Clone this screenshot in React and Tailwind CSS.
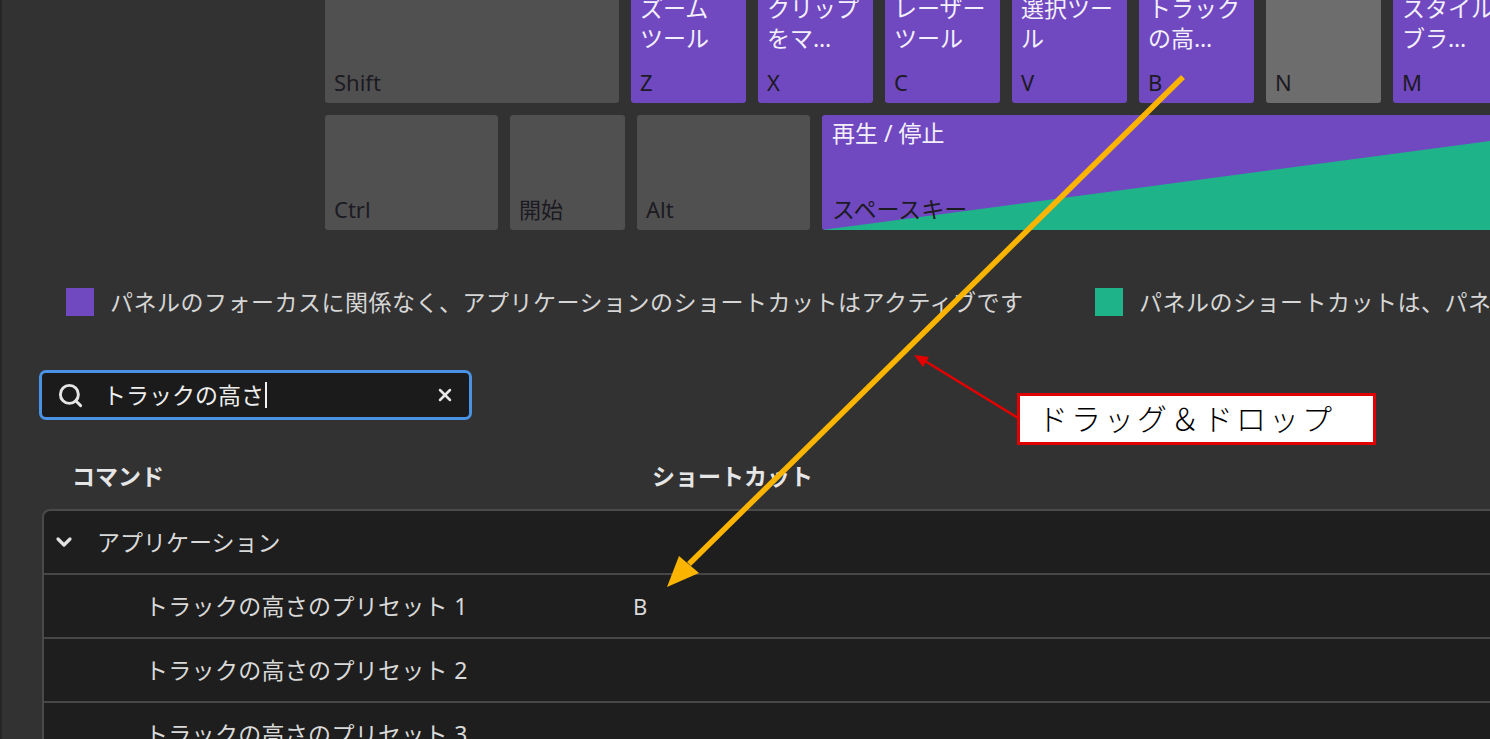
import React from "react";
import { Search, X, ChevronDown } from "lucide-react";

const FONT = "font-['Noto_Sans','Noto_Sans_CJK_JP',sans-serif]";

const topRow = [
  { name: "Shift", tone: "gray", width: "w-[294px]" },
  { name: "Z", lines: ["ズーム", "ツール"], tone: "purple", width: "w-[115px]" },
  { name: "X", lines: ["クリップ", "をマ…"], tone: "purple", width: "w-[115px]" },
  { name: "C", lines: ["レーザー", "ツール"], tone: "purple", width: "w-[115px]" },
  { name: "V", lines: ["選択ツー", "ル"], tone: "purple", width: "w-[115px]" },
  { name: "B", lines: ["トラック", "の高…"], tone: "purple", width: "w-[115px]" },
  { name: "N", tone: "light", width: "w-[115px]" },
  { name: "M", lines: ["スタイル", "ブラ…"], tone: "purple", width: "w-[115px]" },
];

const bottomRow = [
  { name: "Ctrl", tone: "gray", width: "w-[173px]" },
  { name: "開始", tone: "gray", width: "w-[115px]" },
  { name: "Alt", tone: "gray", width: "w-[173px]" },
];

const presets = [
  { name: "トラックの高さのプリセット 1", key: "B" },
  { name: "トラックの高さのプリセット 2", key: "" },
  { name: "トラックの高さのプリセット 3", key: "" },
];

const Key = ({ name, lines, tone, width }) => {
  const bg =
    tone === "purple"
      ? "bg-[#7048c0]"
      : tone === "light"
      ? "bg-[#6d6d6d]"
      : "bg-[#505050]";

  return (
    <div
      className={`${width} ${bg} h-[115px] shrink-0 rounded-[3px] px-[9px] pt-[5px] pb-[6px] flex flex-col justify-between`}
    >
      <div className="text-[23px] leading-[30px] text-[#f3f0fb]">
        {lines && lines.map((line) => <div key={line}>{line}</div>)}
      </div>
      <div className="text-[22px] leading-[30px] text-[#1c1a22]">{name}</div>
    </div>
  );
};

const App = () => {
  return (
    <div
      className={`${FONT} relative flex items-start w-[1490px] h-[739px] overflow-hidden bg-[#323232]`}
    >
      <div className="w-[2px] h-full shrink-0 bg-[#262626]" />

      <div className="flex flex-col shrink-0">
        {/* keyboard */}
        <div className="shrink-0 mt-[-12px] pl-[323px] flex flex-col gap-[12px]">
          <div className="flex gap-[12px] w-max">
            {topRow.map((k) => (
              <Key key={k.name} {...k} />
            ))}
          </div>
          <div className="flex gap-[12px] w-max">
            {bottomRow.map((k) => (
              <Key key={k.name} {...k} />
            ))}
            <div className="relative w-[760px] h-[115px] shrink-0 overflow-hidden rounded-[3px] bg-[#7048c0]">
              <div className="absolute inset-0 bg-[#1fb38a] [clip-path:polygon(0_100%,100%_12%,100%_100%)]" />
              <div className="relative flex h-full flex-col justify-between px-[10px] pt-[3px] pb-[6px]">
                <div className="text-[23px] leading-[30px] text-[#f3f0fb]">
                  再生 / 停止
                </div>
                <div className="text-[23px] leading-[30px] text-[#1c1a22]">
                  スペースキー
                </div>
              </div>
            </div>
          </div>
        </div>

        {/* legend */}
        <div className="shrink-0 mt-[57px] pl-[64px] flex items-center whitespace-nowrap text-[23px] leading-[30px] tracking-[0.5px] text-[#d6d6d6]">
          <div className="w-[1029px] shrink-0 flex items-center gap-[16px]">
            <div className="w-[28px] h-[28px] shrink-0 bg-[#7048c0]" />
            <span>パネルのフォーカスに関係なく、アプリケーションのショートカットはアクティブです</span>
          </div>
          <div className="flex items-center gap-[16px]">
            <div className="w-[28px] h-[28px] shrink-0 bg-[#1fb38a]" />
            <span>パネルのショートカットは、パネルにフォーカスがある場合のみアクティブです</span>
          </div>
        </div>

        {/* search */}
        <div className="shrink-0 mt-[53px] ml-[37px] w-[433px] h-[50px] rounded-[7px] border-[3px] border-[#4a93e4] bg-[#1b1b1b] flex items-center pl-[15px] pr-[14px]">
          <Search size={27} strokeWidth={2.6} className="text-[#e6e6e6] shrink-0" />
          <div className="ml-[19px] flex-1 flex items-center text-[23px] leading-[30px] text-[#eeeeee]">
            トラックの高さ
            <span className="ml-[1px] inline-block h-[26px] w-[2px] bg-[#f2f2f2]" />
          </div>
          <X size={20} strokeWidth={3} className="text-[#e6e6e6] shrink-0" />
        </div>

        {/* column headers */}
        <div className="shrink-0 mt-[41px] pl-[70px] flex text-[23px] leading-[30px] font-bold text-[#e6e6e6]">
          <div className="w-[580px] shrink-0">コマンド</div>
          <div>ショートカット</div>
        </div>

        {/* table */}
        <div className="shrink-0 mt-[18px] ml-[40px] w-[1460px] border-t-2 border-l-2 border-[#4a4a4a] rounded-tl-[8px] bg-[#1e1e1e] text-[23px] leading-[30px] text-[#d9d9d9]">
          <div className="h-[64px] border-b-2 border-[#474747] flex items-center pl-[8px]">
            <ChevronDown size={24} strokeWidth={3.2} className="text-[#e2e2e2] shrink-0" />
            <span className="ml-[21px]">アプリケーション</span>
          </div>
          {presets.map((p) => (
            <div
              key={p.name}
              className="h-[64px] border-b-2 border-[#474747] flex items-center"
            >
              <div className="w-[589px] shrink-0 pl-[101px] tracking-[0.3px]">{p.name}</div>
              <div className="text-[22px]">{p.key}</div>
            </div>
          ))}
        </div>
      </div>

      {/* annotations */}
      <svg
        className="pointer-events-none absolute left-0 top-0"
        width="1490"
        height="739"
        viewBox="0 0 1490 739"
      >
        <line x1="1183" y1="77" x2="689" y2="564" stroke="#fbb400" strokeWidth="5.5" />
        <polygon points="667,587 679,556 699,573" fill="#fbb400" />
        <line x1="1018" y1="418" x2="925" y2="361" stroke="#e40000" strokeWidth="2.5" />
        <polygon points="914,355 929,357 923,367" fill="#e40000" />
      </svg>

      <div className="absolute left-[1017px] top-[393px] w-[359px] h-[52px] border-[3px] border-[#e00000] bg-white flex items-center pl-[18px] text-[30px] leading-none font-light tracking-[3px] text-black">
        ドラッグ＆ドロップ
      </div>
    </div>
  );
};

export default App;
